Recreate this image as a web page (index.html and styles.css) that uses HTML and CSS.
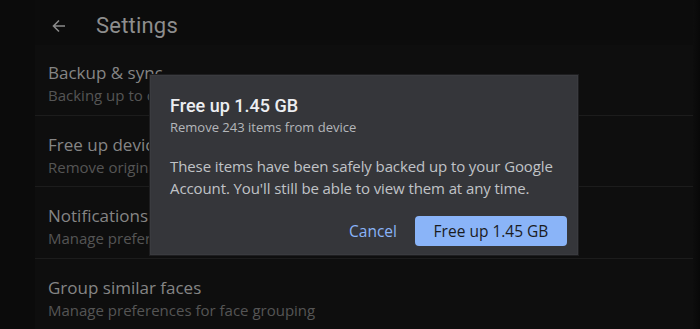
FILE: index.html
```html
<!DOCTYPE html>
<html>
<head>
<meta charset="utf-8">
<link rel="stylesheet" href="styles.css">
</head>
<body>
<div class="screen">
  <div class="content">
    <header class="appbar">
      <svg class="back" width="16" height="16" viewBox="0 0 16 16">
        <path d="M14 8H2.5M8 2.5L2.5 8L8 13.5" fill="none" stroke="#8a8a8a" stroke-width="1.6"/>
      </svg>
      <h1 class="appbar-title">Settings</h1>
    </header>
    <ul class="list">
      <li class="item">
        <div class="item-title">Backup &amp; sync</div>
        <div class="item-sub">Backing up to cloud storage</div>
      </li>
      <li class="item">
        <div class="item-title">Free up device storage</div>
        <div class="item-sub">Remove original photos and videos that have already been backed up.</div>
      </li>
      <li class="item">
        <div class="item-title">Notifications</div>
        <div class="item-sub">Manage preferences for notifications</div>
      </li>
      <li class="item last">
        <div class="item-title">Group similar faces</div>
        <div class="item-sub">Manage preferences for face grouping</div>
      </li>
    </ul>
  </div>
  <div class="edge"></div>

  <div class="dialog">
    <div class="dialog-title">Free up 1.45 GB</div>
    <div class="dialog-sub">Remove 243 items from device</div>
    <p class="dialog-body">These items have been safely backed up to your Google Account. You'll still be able to view them at any time.</p>
    <div class="dialog-actions">
      <button class="btn-text">Cancel</button>
      <button class="btn-primary">Free up 1.45 GB</button>
    </div>
  </div>
</div>
</body>
</html>
```

FILE: styles.css
```css
* { box-sizing: border-box; }
html, body { margin: 0; padding: 0; }
body {
  background: #0b0b0b;
  font-family: "Open Sans", "Noto Sans", sans-serif;
  width: 700px;
  height: 329px;
  overflow: hidden;
}
.screen {
  position: relative;
  display: flex;
  width: 700px;
  height: 329px;
}
.content {
  margin-left: 35px;
  width: 658px;
  background: #0e0e0e;
  display: flex;
  flex-direction: column;
}
.edge {
  flex: 1;
  background: linear-gradient(to right, #0d0d0d, #080808);
}
.appbar {
  height: 52px;
  display: flex;
  align-items: center;
  padding-left: 16px;
  padding-top: 6px;
  background: #0c0c0c;
}
.back { margin-right: 29px; }
.appbar-title {
  margin: 0;
  font-family: "Roboto", "Open Sans", sans-serif;
  font-weight: 400;
  font-size: 22px;
  color: #8e8e8e;
  letter-spacing: 0.2px;
}
.list {
  list-style: none;
  margin: 0;
  padding: 0;
}
.item {
  padding: 17px 0 8.5px 13px;
  border-bottom: 1.5px solid #1c1c1c;
  white-space: nowrap;
}
.item:first-child { padding-top: 16px; }
.item.last { border-bottom: none; }
.item-title {
  font-size: 17px;
  line-height: 23px;
  color: #858585;
}
.item-sub {
  font-size: 15px;
  line-height: 22px;
  color: #555555;
}
.dialog {
  position: absolute;
  left: 150px;
  top: 75px;
  width: 428px;
  height: 180px;
  background: #35363a;
  border: 1px solid #3a3b3f;
  box-shadow: 0 0 0 1px #1e1e20;
  padding: 18px 10px 8px 19px;
  display: flex;
  flex-direction: column;
}
.dialog-title {
  font-family: "Roboto", "Open Sans", sans-serif;
  font-size: 18px;
  line-height: 24px;
  color: #eceef1;
  font-weight: 500;
}
.dialog-sub {
  font-size: 13px;
  line-height: 18px;
  color: #b4b6ba;
}
.dialog-body {
  margin: 20px 0 0 0;
  font-size: 15px;
  line-height: 21.5px;
  color: #c0c3c7;
  width: 395px;
  letter-spacing: -0.1px;
}
.dialog-actions {
  margin-top: auto;
  display: flex;
  justify-content: flex-end;
  align-items: center;
  gap: 18px;
}
.btn-text {
  background: none;
  border: none;
  padding: 0;
  font-family: "Open Sans", sans-serif;
  font-size: 15.5px;
  color: #8ab4f8;
}
.btn-primary {
  background: #8ab4f8;
  border: none;
  border-radius: 4px;
  width: 152px;
  height: 30px;
  font-family: "Open Sans", sans-serif;
  font-size: 15.5px;
  color: #1b1c1f;
}
```
